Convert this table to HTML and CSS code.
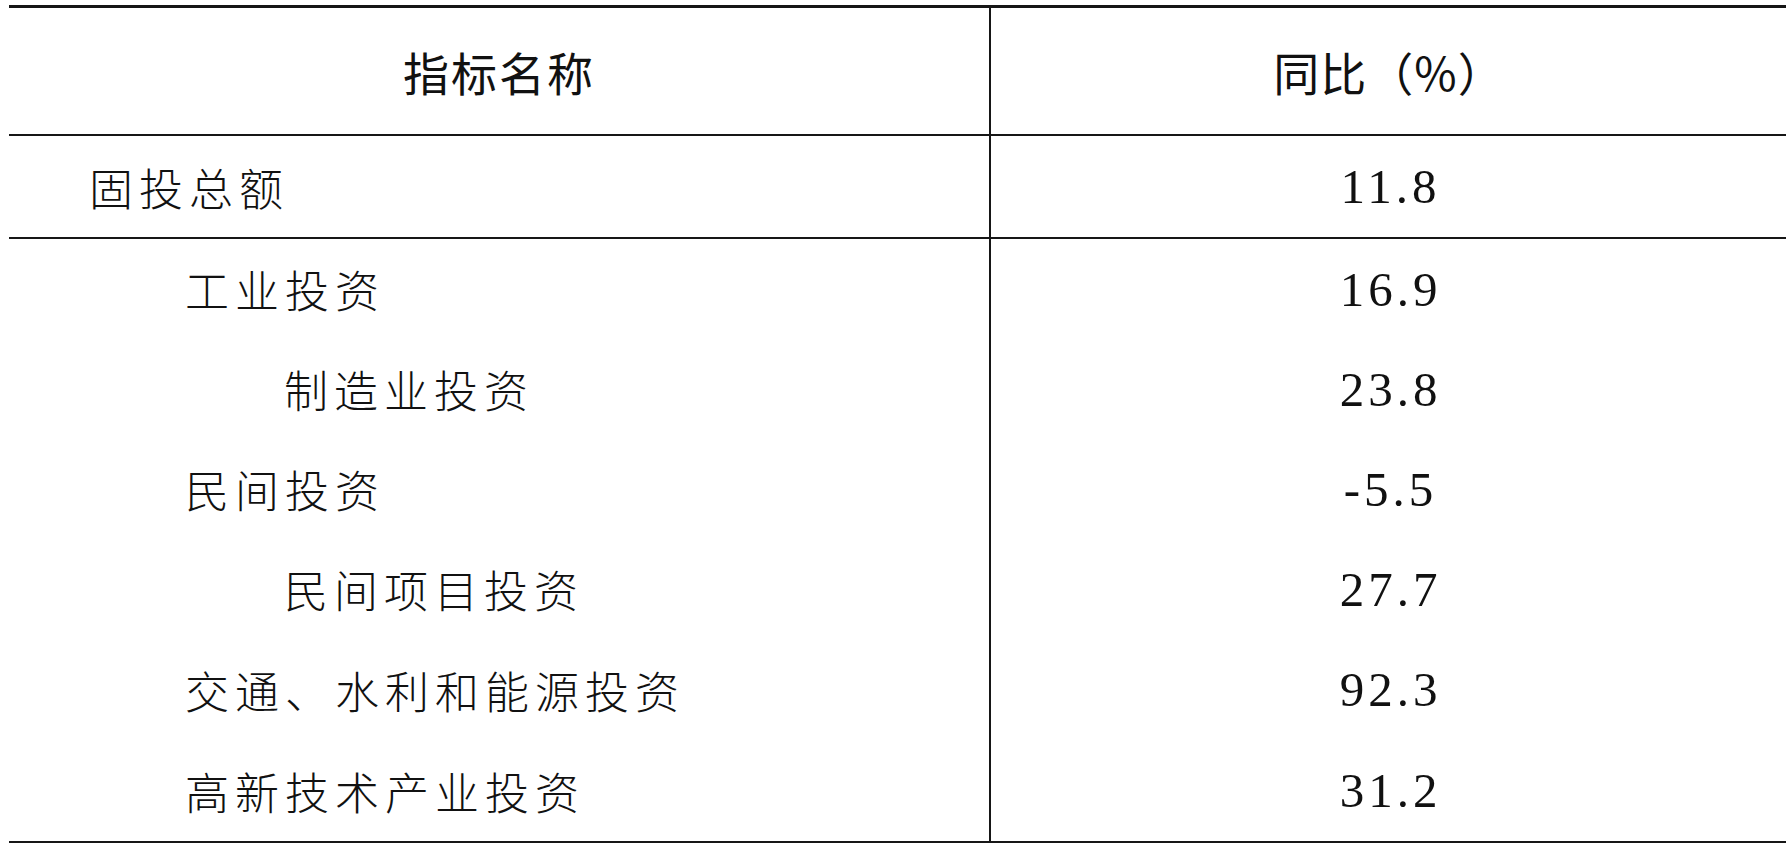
FILE: index.html
```html
<!DOCTYPE html>
<html lang="zh-CN">
<head>
<meta charset="utf-8">
<title>固定资产投资</title>
<link rel="stylesheet" href="styles.css">
</head>
<body>
<div class="sheet">
  <div class="row head">
    <div class="cell name">指标名称</div>
    <div class="cell val">同比（%）</div>
  </div>
  <div class="row total">
    <div class="cell name lv0">固投总额</div>
    <div class="cell val">11.8</div>
  </div>
  <div class="row item">
    <div class="cell name lv1">工业投资</div>
    <div class="cell val">16.9</div>
  </div>
  <div class="row item">
    <div class="cell name lv2">制造业投资</div>
    <div class="cell val">23.8</div>
  </div>
  <div class="row item">
    <div class="cell name lv1">民间投资</div>
    <div class="cell val">-5.5</div>
  </div>
  <div class="row item">
    <div class="cell name lv2">民间项目投资</div>
    <div class="cell val">27.7</div>
  </div>
  <div class="row item tall">
    <div class="cell name lv1">交通、水利和能源投资</div>
    <div class="cell val">92.3</div>
  </div>
  <div class="row item tall">
    <div class="cell name lv1">高新技术产业投资</div>
    <div class="cell val">31.2</div>
  </div>
</div>
</body>
</html>
```

FILE: styles.css
```css
html, body {
  margin: 0;
  padding: 0;
  background: #ffffff;
}

body {
  width: 1786px;
  height: 843px;
  overflow: hidden;
  padding-top: 5px;
  padding-left: 9px;
  box-sizing: border-box;
}

.sheet {
  width: 1790px;
  border-top: 3px solid #161616;
  border-bottom: 2px solid #161616;
  color: #111111;
}

.row {
  display: grid;
  grid-template-columns: 982px 1fr;
  box-sizing: border-box;
}

.head {
  height: 128px;
  border-bottom: 2px solid #161616;
}

.total {
  height: 103px;
  border-bottom: 2px solid #161616;
}

.item {
  height: 100px;
}

.item.tall {
  height: 101px;
}

.cell {
  display: flex;
  align-items: center;
  white-space: nowrap;
}

.name {
  border-right: 2px solid #161616;
  font-family: "Noto Sans CJK SC", "Noto Sans", sans-serif;
  font-size: 44px;
  font-weight: 300;
  letter-spacing: 6px;
  padding-left: 80px;
}

.lv1 {
  padding-left: 176px;
}

.lv2 {
  padding-left: 275px;
}

.val {
  justify-content: center;
  font-family: "Liberation Serif", "Noto Sans CJK SC", serif;
  font-size: 49px;
  letter-spacing: 4px;
  padding-right: 9px;
}

.head .cell {
  font-family: "Noto Sans CJK SC", "Noto Sans", sans-serif;
  font-size: 46px;
  font-weight: 400;
  letter-spacing: 2px;
  justify-content: center;
  padding-left: 0;
}

.head .val {
  padding-right: 12px;
  letter-spacing: 1px;
}
```
